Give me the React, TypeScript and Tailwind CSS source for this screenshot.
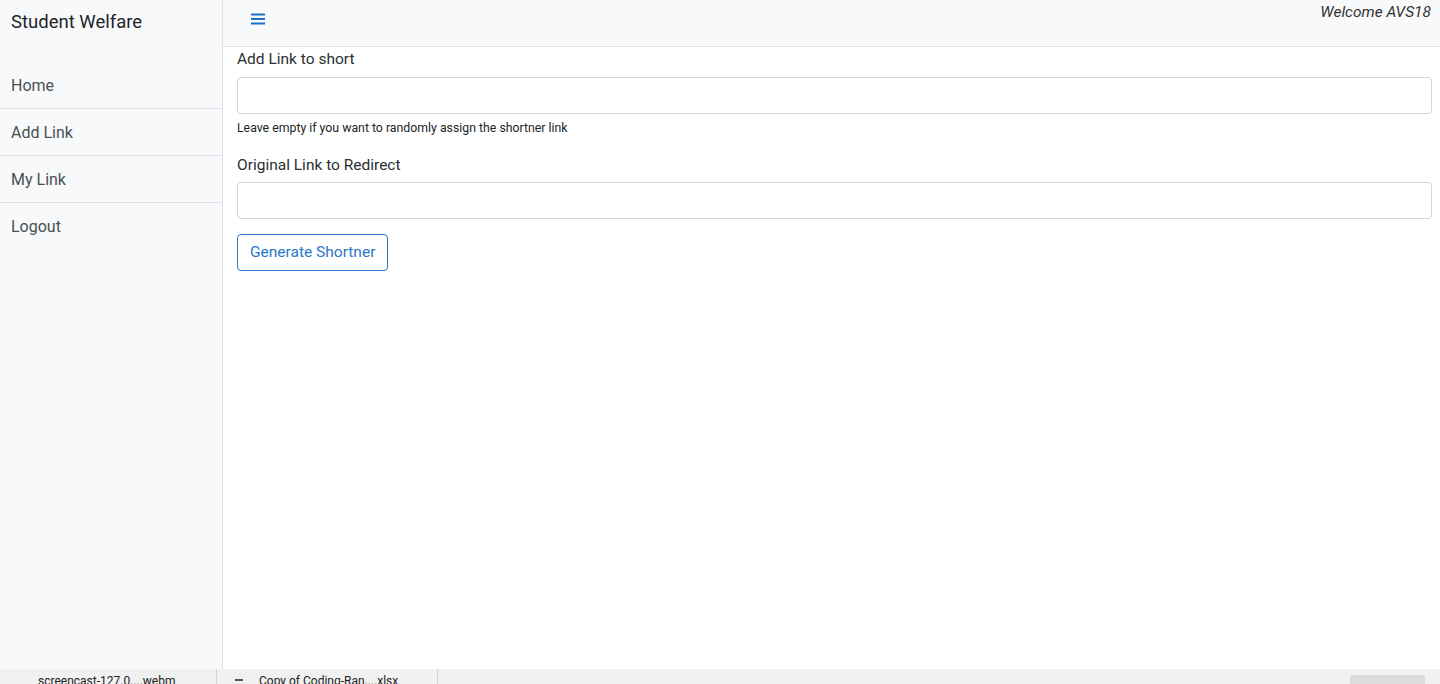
import React from "react";

const navItems = ["Home", "Add Link", "My Link", "Logout"];

const Sidebar = () => {
  return (
    <div className="w-[223px] shrink-0 bg-[#f8f9fa] border-r border-[#dee2e6] flex flex-col">
      <div className="h-[44px] flex items-center pl-[11px] pt-[1px] text-[18.5px] text-[#212529]">
        Student Welfare
      </div>
      <div className="mt-[18px] flex flex-col">
        {navItems.map((item, i) => (
          <div
            key={item}
            className={
              i < navItems.length - 1
                ? "h-[47px] flex items-center pl-[11px] pt-[1px] text-[16px] text-[#495057] border-b border-[#dee2e6]"
                : "h-[47px] flex items-center pl-[11px] pt-[1px] text-[16px] text-[#495057]"
            }
          >
            {item}
          </div>
        ))}
      </div>
    </div>
  );
};

const Header = () => {
  return (
    <div className="h-[47px] shrink-0 bg-[#f8f9fa] border-b border-[#dee2e6] flex items-start justify-between">
      <div className="pl-[28px] pt-[13px]">
        <svg width="14" height="12" viewBox="0 0 14 12">
          <rect x="0" y="0.5" width="14" height="2" fill="#1f6fc5" />
          <rect x="0" y="5" width="14" height="2" fill="#1f6fc5" />
          <rect x="0" y="9.5" width="14" height="2" fill="#1f6fc5" />
        </svg>
      </div>
      <div className="pr-[9px] pt-[1px] italic text-[15.5px] leading-[22px] text-[#333]">Welcome AVS18</div>
    </div>
  );
};

const Form = () => {
  return (
    <div className="pl-[14px] pr-[8px] flex flex-col">
      <label className="text-[15.5px] text-[#2b2f33] leading-[24px]">Add Link to short</label>
      <input
        type="text"
        className="mt-[6px] h-[37px] w-full border border-[#ced4da] rounded-[4px] bg-white outline-none px-3"
      />
      <small className="mt-[5px] text-[12.3px] text-[#212529] leading-[18px]">
        Leave empty if you want to randomly assign the shortner link
      </small>
      <label className="mt-[16px] text-[15.5px] text-[#2b2f33] leading-[24px]">Original Link to Redirect</label>
      <input
        type="text"
        className="mt-[5px] h-[37px] w-full border border-[#ced4da] rounded-[4px] bg-white outline-none px-3"
      />
      <div className="mt-[15px]">
        <button className="h-[37px] px-[12px] border border-[#2a78c9] rounded-[4px] text-[#2a78c9] text-[15.5px] bg-white">
          Generate Shortner
        </button>
      </div>
    </div>
  );
};

const DownloadBar = () => {
  return (
    <div className="h-[15px] shrink-0 bg-[#f1f1f1] overflow-hidden flex items-start text-[12px] text-[#222] leading-[14px]">
      <div className="w-[217px] h-full border-r border-[#d4d4d4] flex items-start pl-[38px] pt-[5px]">
        screencast-127.0....webm
      </div>
      <div className="w-[221px] h-full border-r border-[#d4d4d4] flex items-start pt-[5px]">
        <span className="ml-[18px] mt-[5px] w-[8px] h-[2px] bg-[#555] inline-block" />
        <span className="ml-[16px]">Copy of Coding-Ran....xlsx</span>
      </div>
      <div className="flex-1" />
      <div className="mr-[15px] mt-[6px] w-[75px] h-[12px] bg-[#dcdcdc] rounded-[2px]" />
    </div>
  );
};

export default function App() {
  return (
    <div
      className="w-[1440px] h-[684px] flex flex-col bg-white overflow-hidden"
      style={{ fontFamily: 'Roboto, "Open Sans", sans-serif' }}
    >
      <div className="flex flex-1 min-h-0">
        <Sidebar />
        <div className="flex-1 flex flex-col bg-white">
          <Header />
          <Form />
        </div>
      </div>
      <DownloadBar />
    </div>
  );
}
